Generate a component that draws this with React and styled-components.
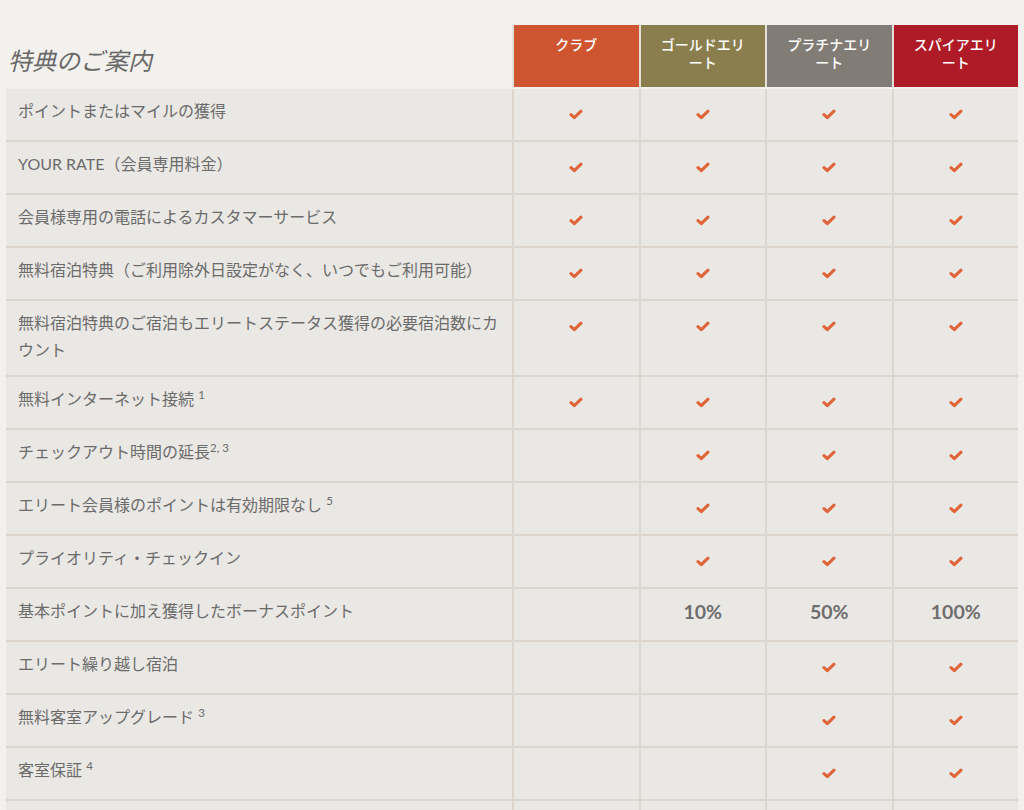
import React from "react";
import styled, { createGlobalStyle } from "styled-components";

const GlobalStyle = createGlobalStyle`
  html, body {
    margin: 0;
    padding: 0;
    background: #f3f1ed;
  }
  body {
    font-family: Lato, "Noto Sans CJK JP", "Noto Sans", sans-serif;
    color: #6b6b6b;
  }
`;

const COLS = "506px repeat(4, 1fr)";
const BORDER = "#dcd6ce";

const Page = styled.div`
  box-sizing: border-box;
  width: 1024px;
  padding: 25px 6px 0 6px;
`;

const Table = styled.div`
  display: flex;
  flex-direction: column;
  width: 1012px;
`;

const HeaderRow = styled.div`
  display: grid;
  grid-template-columns: ${COLS};
  column-gap: 2px;
  margin-bottom: 2px;
  height: 62px;
  background: #e4dfd8;
`;

const TitleCell = styled.div`
  display: flex;
  align-items: flex-end;
  background: #f3f1ed;
  padding: 0 0 12px 2px;
`;

const Title = styled.h2`
  margin: 0;
  font-size: 24px;
  line-height: 29px;
  font-weight: 400;
  font-style: italic;
  color: #686868;
`;

const TierCell = styled.div`
  box-sizing: border-box;
  background: ${(p) => p.$color};
  color: #ffffff;
  font-size: 14px;
  font-weight: 500;
  line-height: 18px;
  text-align: center;
  padding: 11px 14px 0;
`;

const Body = styled.div`
  display: grid;
  grid-template-columns: ${COLS};
  gap: 2px;
  background: ${BORDER};
  padding-bottom: 2px;
`;

const LabelCell = styled.div`
  background: #eae8e4;
  font-size: 16px;
  line-height: 26.5px;
  padding: 9px 12px 12px 12px;
  color: #6b6b6b;
  min-height: 30px;
`;

const Sup = styled.sup`
  font-size: 11.5px;
  line-height: 0;
  vertical-align: 6px;
`;

const ValueCell = styled.div`
  background: #eae8e4;
  display: flex;
  justify-content: center;
  align-items: flex-start;
  padding: 10px 0 11px;
  min-height: 30px;
`;

const CheckBox = styled.span`
  display: flex;
  align-items: center;
  justify-content: center;
  height: 30px;
`;

const Percent = styled.span`
  font-family: Lato, "Noto Sans", sans-serif;
  font-weight: 700;
  font-size: 19.5px;
  line-height: 26px;
  color: #6e6e6e;
`;

const CheckIcon = () => (
  <svg width="14" height="11" viewBox="0 0 14 11" aria-hidden="true">
    <path
      d="M2 5.6 L5.3 8.6 L12 2.2"
      fill="none"
      stroke="#df6438"
      strokeWidth="3.1"
      strokeLinecap="round"
      strokeLinejoin="round"
    />
  </svg>
);

const tiers = [
  { name: "クラブ", color: "#cf5530" },
  { name: "ゴールドエリート", color: "#8a7e4e" },
  { name: "プラチナエリート", color: "#817c75" },
  { name: "スパイアエリート", color: "#ae1a26" },
];

const ALL = ["c", "c", "c", "c"];
const ELITE = ["", "c", "c", "c"];
const TOP = ["", "", "c", "c"];

const rows = [
  { label: "ポイントまたはマイルの獲得", v: ALL },
  { label: "YOUR RATE（会員専用料金）", v: ALL },
  { label: "会員様専用の電話によるカスタマーサービス", v: ALL },
  { label: "無料宿泊特典（ご利用除外日設定がなく、いつでもご利用可能）", v: ALL },
  { label: "無料宿泊特典のご宿泊もエリートステータス獲得の必要宿泊数にカウント", v: ALL },
  { label: "無料インターネット接続", sup: " 1", v: ALL },
  { label: "チェックアウト時間の延長", sup: "2, 3", v: ELITE },
  { label: "エリート会員様のポイントは有効期限なし", sup: " 5", v: ELITE },
  { label: "プライオリティ・チェックイン", v: ELITE },
  { label: "基本ポイントに加え獲得したボーナスポイント", v: ["", "10%", "50%", "100%"] },
  { label: "エリート繰り越し宿泊", v: TOP },
  { label: "無料客室アップグレード", sup: " 3", v: TOP },
  { label: "客室保証", sup: " 4", v: TOP },
  { label: "", v: ["", "", "", ""] },
];

function Value({ v }) {
  if (v === "c") {
    return (
      <CheckBox>
        <CheckIcon />
      </CheckBox>
    );
  }
  if (v) return <Percent>{v}</Percent>;
  return null;
}

export default function App() {
  return (
    <>
      <GlobalStyle />
      <Page>
        <Table>
          <HeaderRow>
            <TitleCell>
              <Title>特典のご案内</Title>
            </TitleCell>
            {tiers.map((t) => (
              <TierCell key={t.name} $color={t.color}>
                {t.name}
              </TierCell>
            ))}
          </HeaderRow>
          <Body>
            {rows.map((r, i) => (
              <React.Fragment key={i}>
                <LabelCell>
                  {r.label}
                  {r.sup && (
                    <>
                      {r.sup.startsWith(" ") ? " " : ""}
                      <Sup>{r.sup.trim()}</Sup>
                    </>
                  )}
                </LabelCell>
                {r.v.map((v, j) => (
                  <ValueCell key={j}>
                    <Value v={v} />
                  </ValueCell>
                ))}
              </React.Fragment>
            ))}
          </Body>
        </Table>
      </Page>
    </>
  );
}
